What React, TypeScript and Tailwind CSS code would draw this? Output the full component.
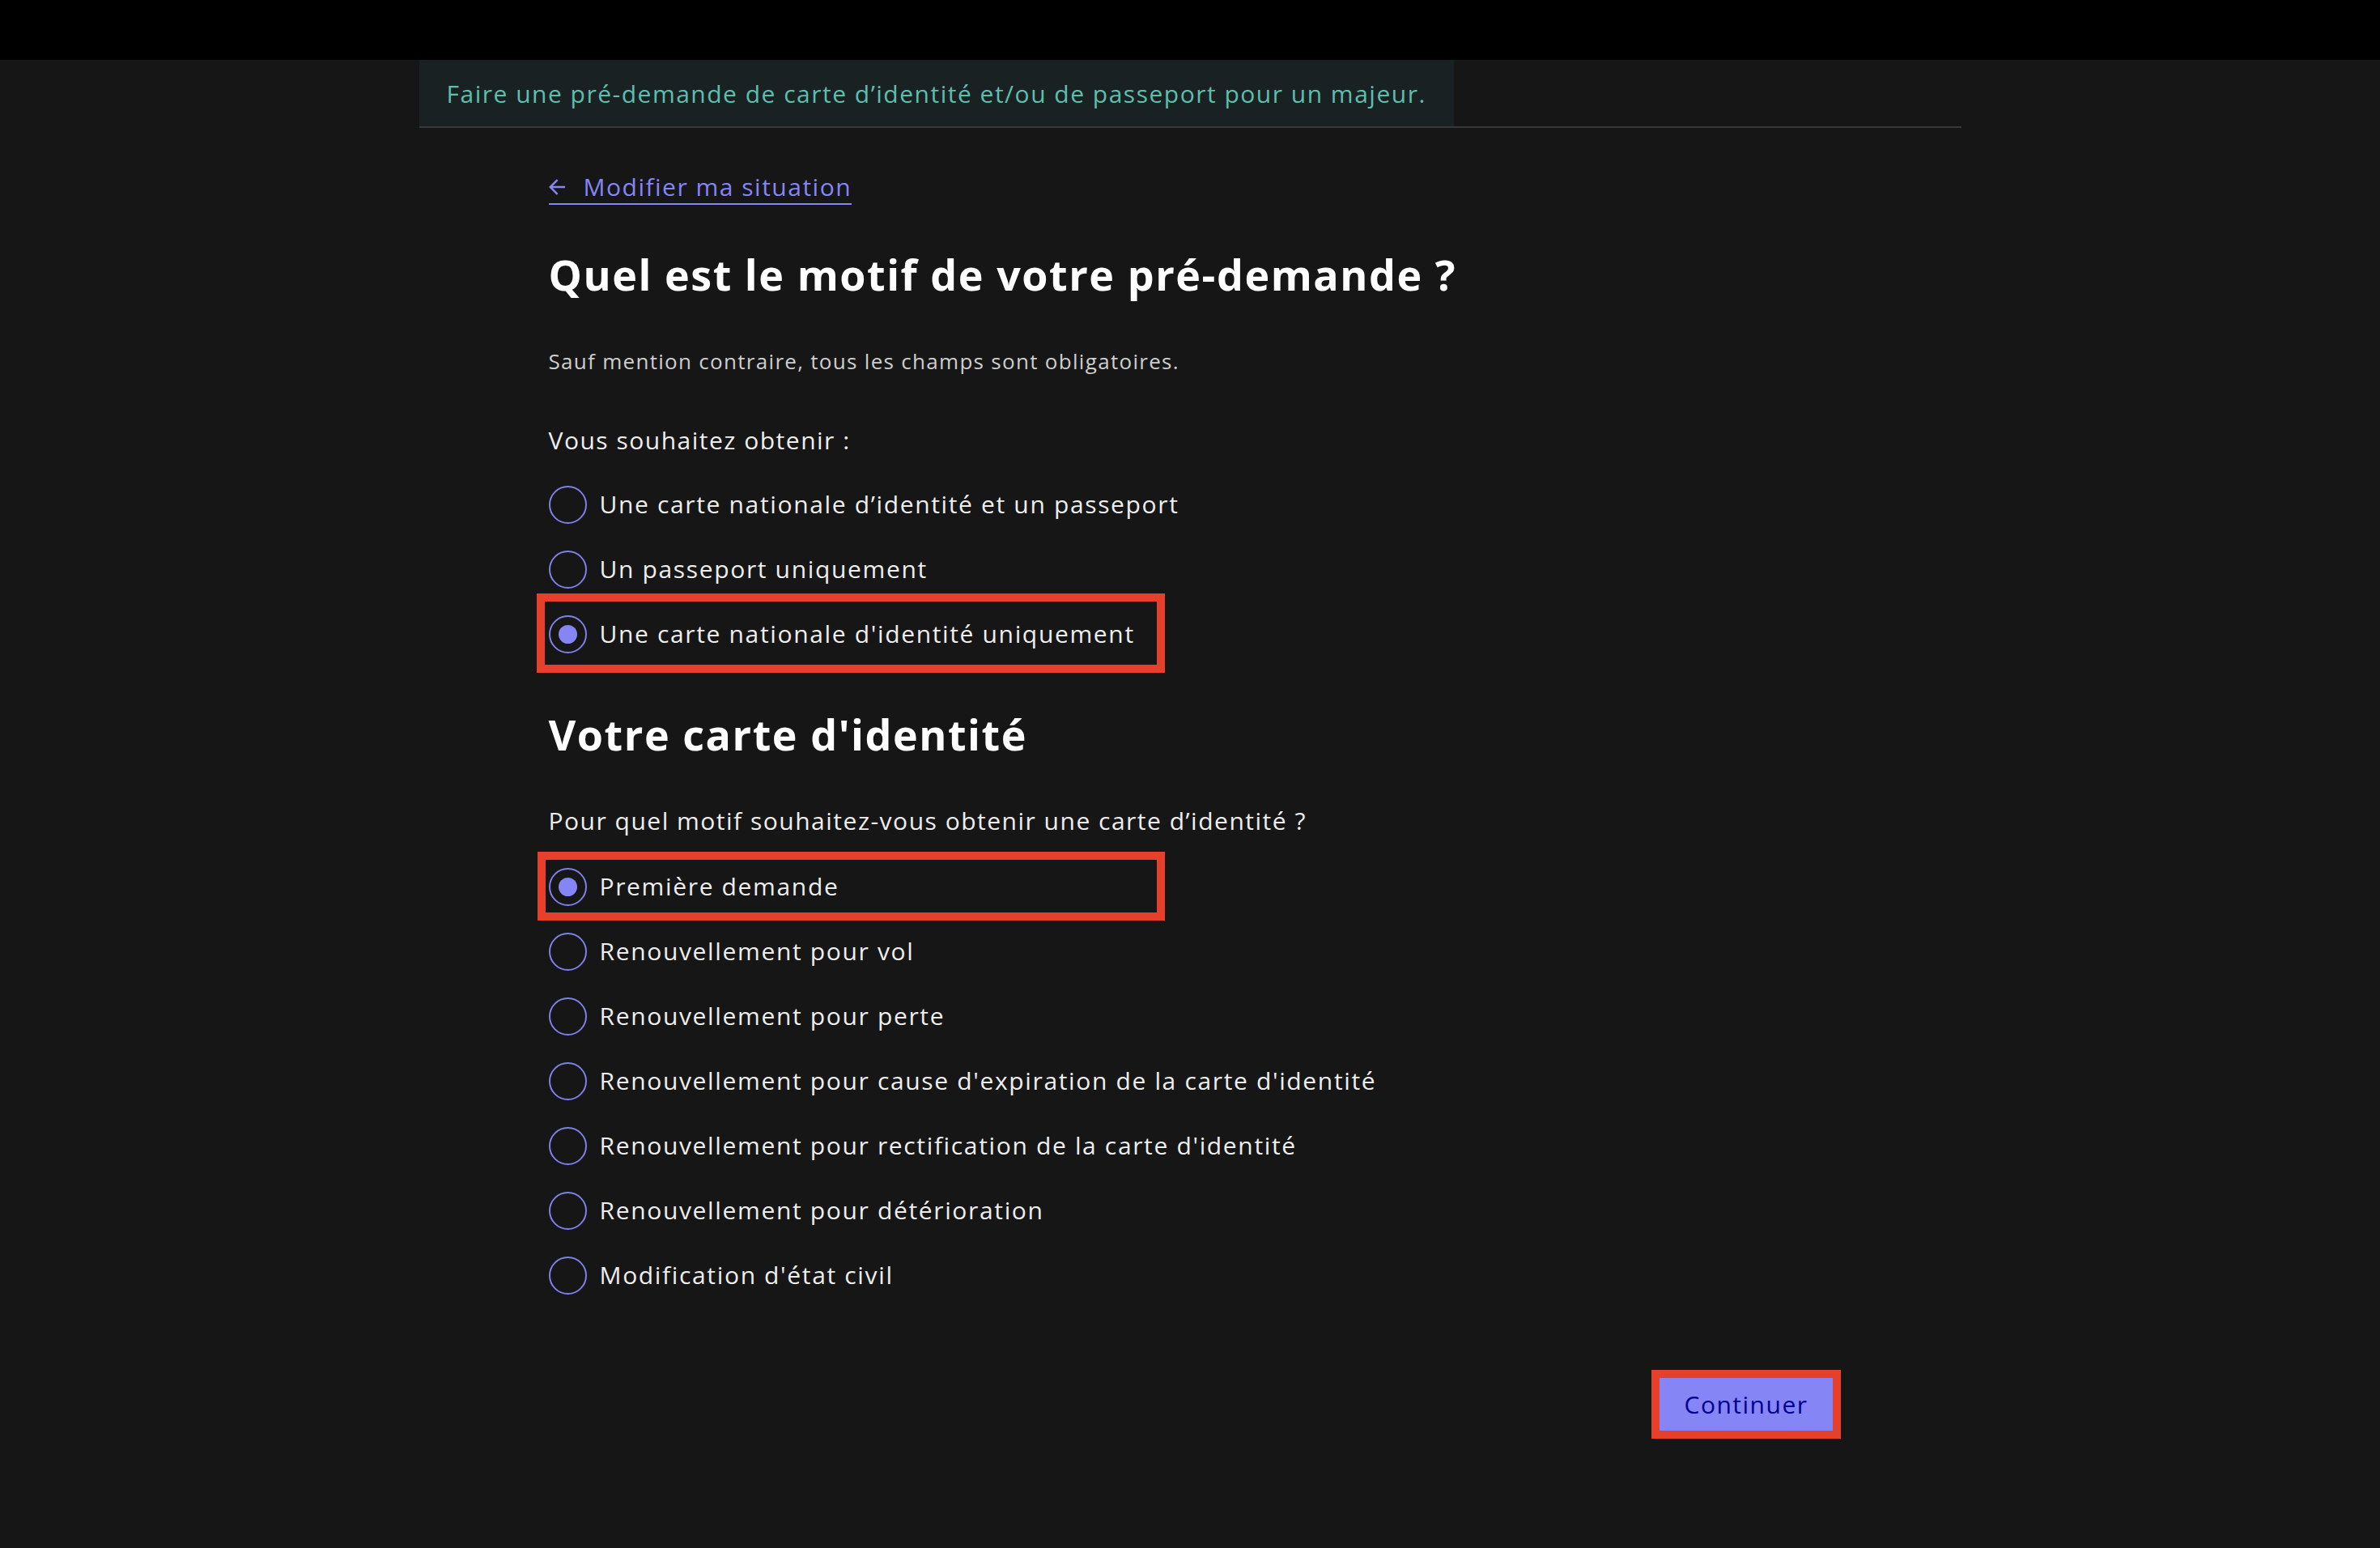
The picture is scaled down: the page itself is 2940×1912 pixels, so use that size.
import React from "react";

const font = "font-['Open_Sans','Noto_Sans',sans-serif]";

const firstGroup = [
  "Une carte nationale d’identité et un passeport",
  "Un passeport uniquement",
  "Une carte nationale d'identité uniquement",
];

const secondGroup = [
  "Première demande",
  "Renouvellement pour vol",
  "Renouvellement pour perte",
  "Renouvellement pour cause d'expiration de la carte d'identité",
  "Renouvellement pour rectification de la carte d'identité",
  "Renouvellement pour détérioration",
  "Modification d'état civil",
];

function Radio({ label, checked, highlight }: { label: string; checked?: boolean; highlight?: "tall" | "short" }) {
  return (
    <label className="relative flex h-[80px] items-center gap-[16px] text-[30px] leading-[40px] tracking-[0.055em] text-[#eeeeee]">
      {highlight === "tall" && (
        <span className="pointer-events-none absolute left-[-15px] top-[-10px] h-[98px] w-[776px] border-[10px] border-[#e63f2a]" />
      )}
      {highlight === "short" && (
        <span className="pointer-events-none absolute left-[-14px] top-[-3px] h-[85px] w-[775px] border-[10px] border-[#e63f2a]" />
      )}
      <span className="flex h-[47px] w-[47px] shrink-0 items-center justify-center rounded-full border-[2px] border-[#7f7fe8]">
        {checked && <span className="h-[23px] w-[23px] rounded-full bg-[#8585f6]" />}
      </span>
      <span>{label}</span>
    </label>
  );
}

export default function App() {
  return (
    <div className={`min-h-[1912px] bg-[#161616] ${font}`}>
      <div className="h-[74px] bg-black" />

      <div className="mx-auto w-[1905px]">
        {/* page banner */}
        <div className="border-b-[2px] border-[#383838]">
          <div className="inline-flex h-[82px] items-center bg-[#1a2122] px-[34px] text-[30px] tracking-[0.05em] text-[#5cbfae]">
            Faire une pré-demande de carte d’identité et/ou de passeport pour un majeur.
          </div>
        </div>

        <main className="pl-[160px] pr-[149px]">
          <a className="mt-[53px] inline-flex h-[42px] items-center gap-[18px] border-b-[2px] border-[#8585f6] text-[30px] leading-[40px] tracking-[0.05em] text-[#8585f6]">
            <svg viewBox="0 0 24 24" width="30" height="30" fill="currentColor" className="-ml-[5px]" aria-hidden>
              <path d="M7.828 11H20v2H7.828l5.364 5.364-1.414 1.414L4 12l7.778-7.778 1.414 1.414z" />
            </svg>
            Modifier ma situation
          </a>

          <h1 className="mt-[54px] text-[52px] font-bold leading-[64px] tracking-[0.03em] text-white">
            Quel est le motif de votre pré-demande ?
          </h1>

          <p className="mt-[55px] text-[26px] leading-[40px] tracking-[0.05em] text-[#cecece]">
            Sauf mention contraire, tous les champs sont obligatoires.
          </p>

          <div role="radiogroup">
            <p className="mt-[58px] text-[30px] leading-[40px] tracking-[0.05em] text-[#eeeeee]">Vous souhaitez obtenir :</p>
            <div className="mt-[19px] flex flex-col">
              {firstGroup.map((l, i) => (
                <Radio key={l} label={l} checked={i === 2} highlight={i === 2 ? "tall" : undefined} />
              ))}
            </div>
          </div>

          <h2 className="mt-[52px] text-[52px] font-bold leading-[64px] tracking-[0.03em] text-white">Votre carte d'identité</h2>

          <div role="radiogroup">
            <p className="mt-[55px] text-[30px] leading-[40px] tracking-[0.05em] text-[#eeeeee]">
              Pour quel motif souhaitez-vous obtenir une carte d’identité ?
            </p>
            <div className="mt-[21px] flex flex-col">
              {secondGroup.map((l, i) => (
                <Radio key={l} label={l} checked={i === 0} highlight={i === 0 ? "short" : undefined} />
              ))}
            </div>
          </div>

          <div className="mt-[77px] flex justify-end">
            <div className="border-[10px] border-[#e63f2a]">
              <button className="h-[65px] bg-[#8585f6] px-[30px] text-[30px] font-medium tracking-[0.05em] text-[#000091]">
                Continuer
              </button>
            </div>
          </div>
        </main>
      </div>
    </div>
  );
}
